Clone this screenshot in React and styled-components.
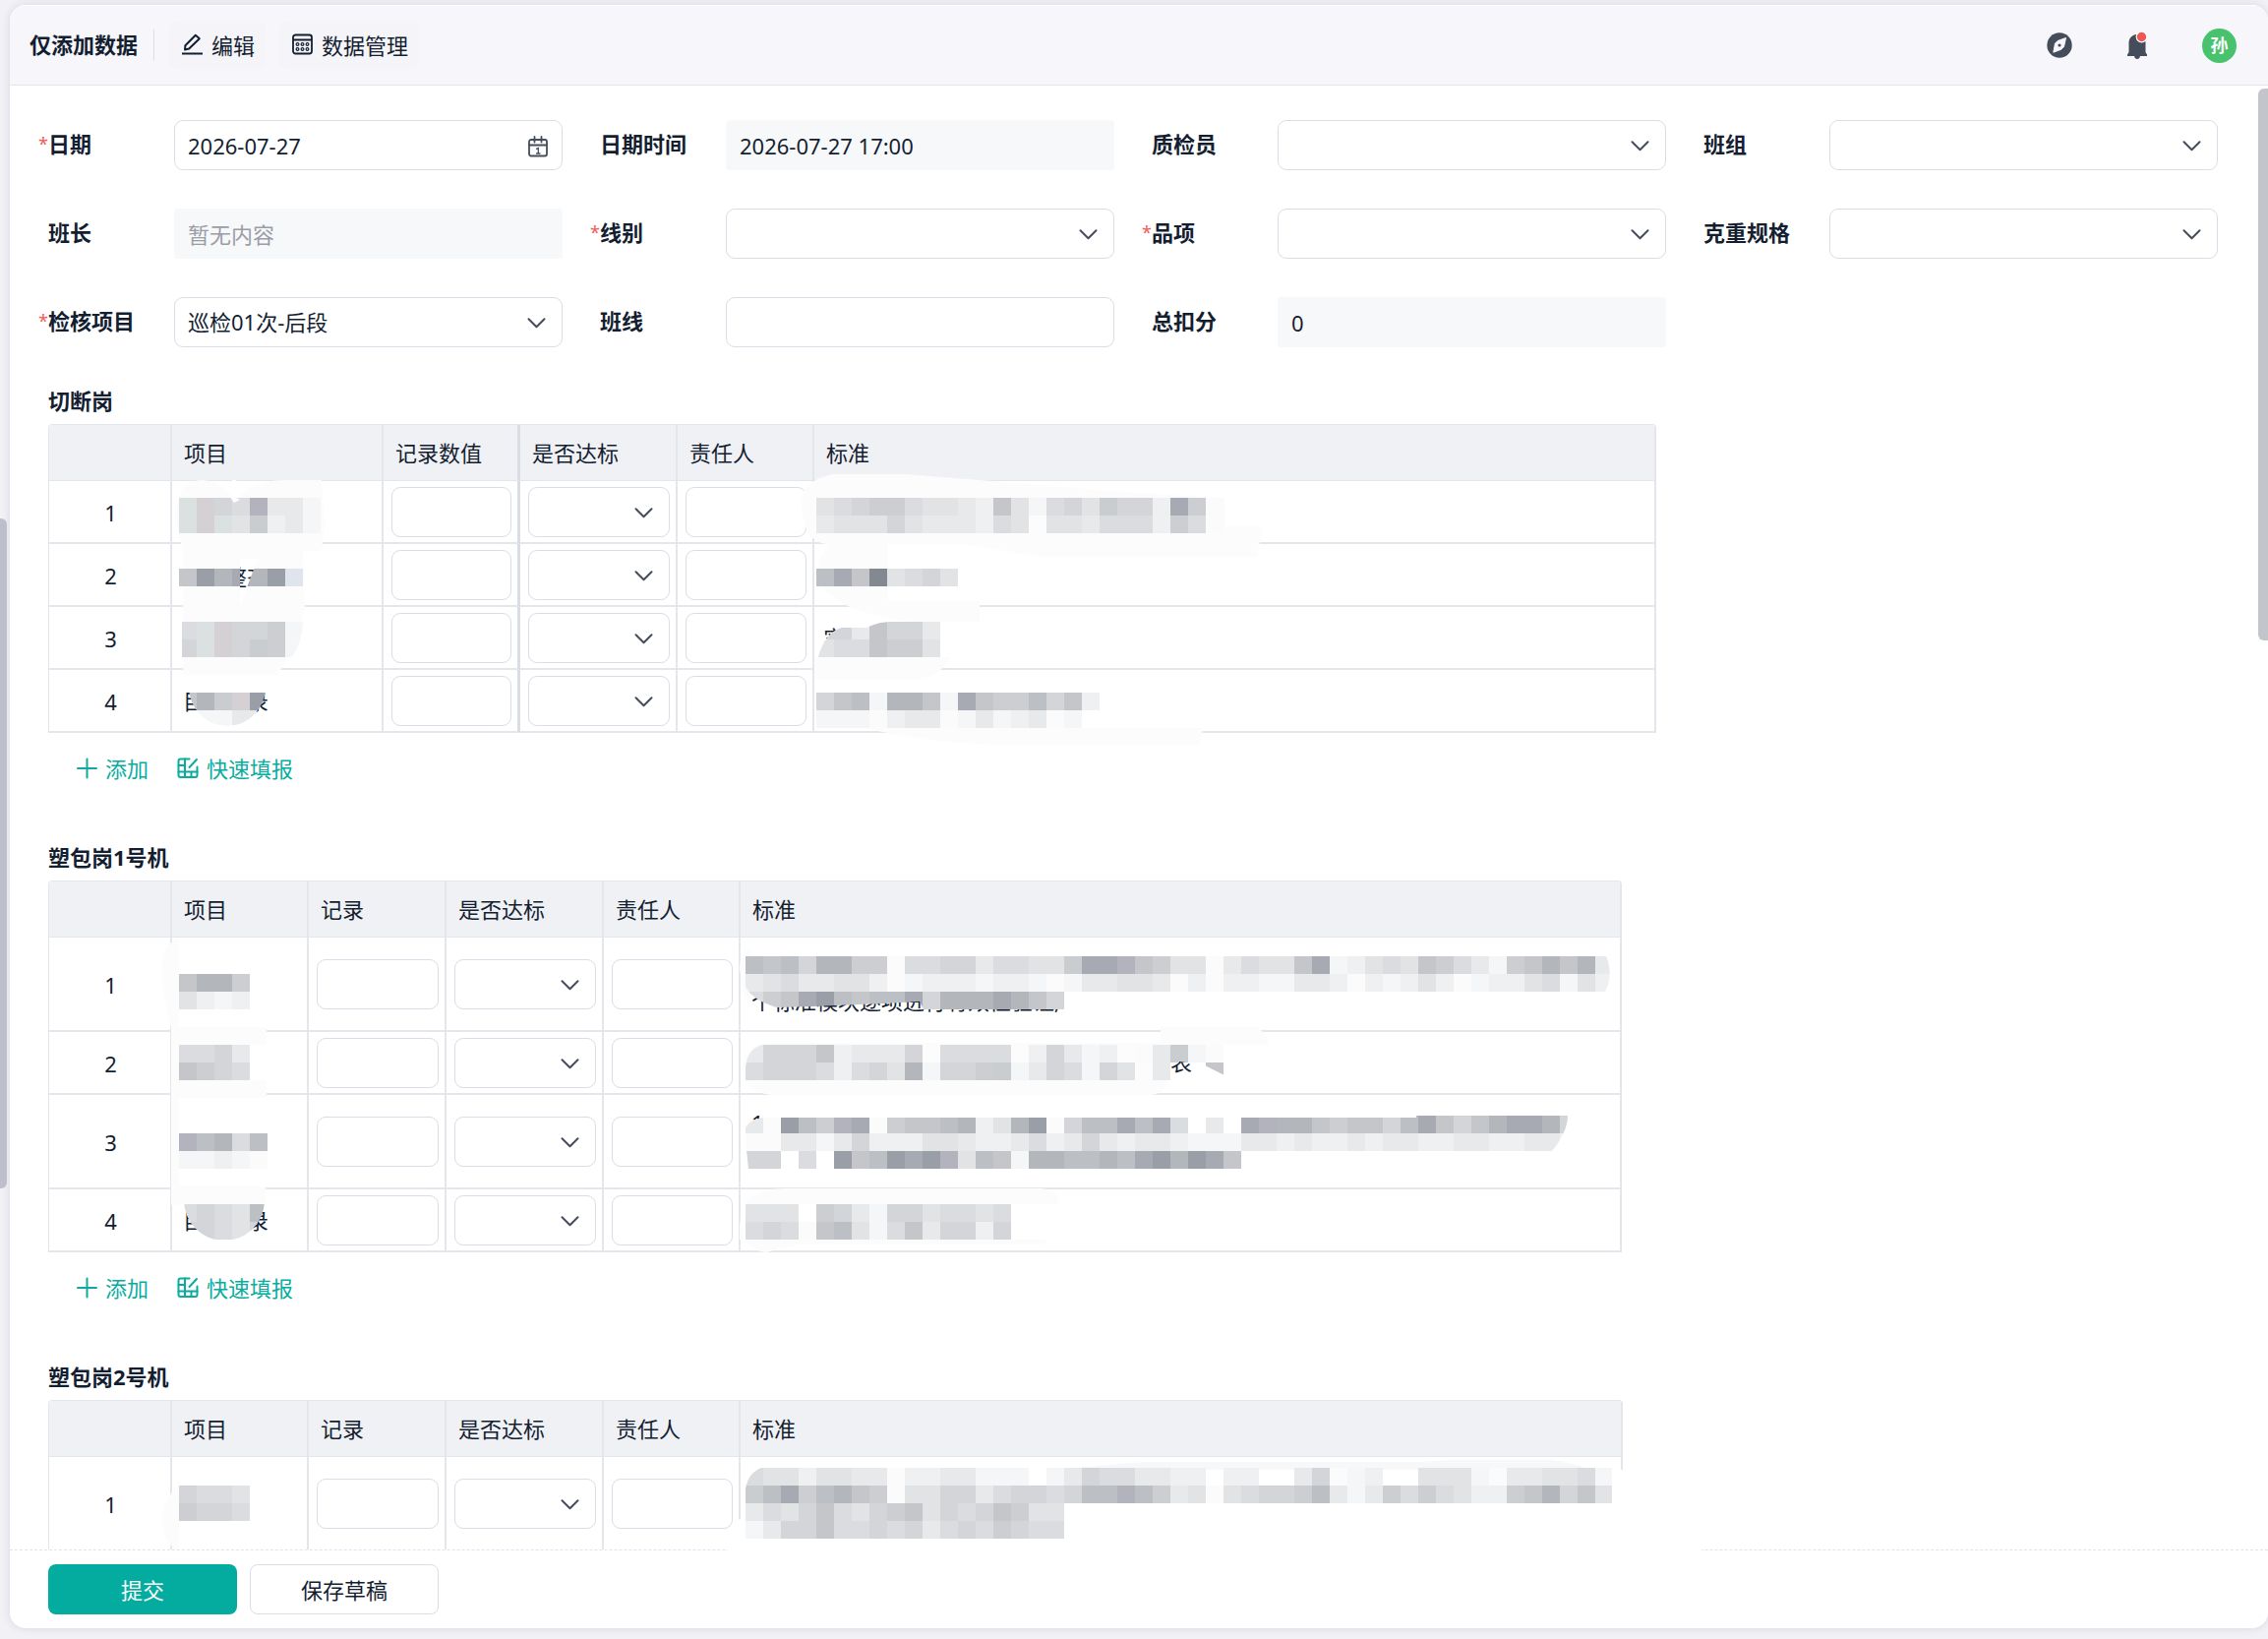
import React from 'react'
import styled, { createGlobalStyle } from 'styled-components'

const FIELDS = [
    { id: 'date', label: '日期', required: true, kind: 'date', value: '2026-07-27' },
    { id: 'datetime', label: '日期时间', kind: 'readonly', value: '2026-07-27 17:00' },
    { id: 'inspector', label: '质检员', kind: 'select' },
    { id: 'team', label: '班组', kind: 'select' },
    { id: 'leader', label: '班长', kind: 'readonly', placeholder: '暂无内容' },
    { id: 'line', label: '线别', required: true, kind: 'select' },
    { id: 'item', label: '品项', required: true, kind: 'select' },
    { id: 'weight', label: '克重规格', kind: 'select' },
    { id: 'check', label: '检核项目', required: true, kind: 'select', value: '巡检01次-后段' },
    { id: 'shift', label: '班线', kind: 'text' },
    { id: 'score', label: '总扣分', kind: 'readonly', value: '0' },
]

const SECTIONS = [
    {
        id: 'cut',
        title: '切断岗',
        widths: [125, 215, 139, 160, 139, 856],
        frozen: 2,
        columns: ['', '项目', '记录数值', '是否达标', '责任人', '标准'],
        rows: [64, 64, 64, 64],
        cover: CutCover,
        editable: true,
    },
    {
        id: 'pack1',
        title: '塑包岗1号机',
        widths: [125, 139, 140, 160, 139, 896],
        columns: ['', '项目', '记录', '是否达标', '责任人', '标准'],
        rows: [96, 64, 96, 64],
        cover: PackOneCover,
        editable: true,
    },
    {
        id: 'pack2',
        title: '塑包岗2号机',
        widths: [125, 139, 140, 160, 139, 897],
        columns: ['', '项目', '记录', '是否达标', '责任人', '标准'],
        rows: [96],
        cover: PackTwoCover,
    },
]

// shades of the masking blocks, light to dark, then the tinted ones
const SHADES = {
    a: '#fbfbfb', b: '#f5f6f7', c: '#eff0f1', d: '#e8e9eb', e: '#e2e3e5', f: '#dbdcdf',
    g: '#d4d5d9', h: '#cdced1', i: '#c4c6ca', j: '#bcbfc4', k: '#b3b6bb', l: '#a7aab2',
    m: '#999ea7', n: '#848891', p: '#d5d0d3', q: '#dbe1e1', r: '#b3b3be', s: '#c9cdd0',
    t: '#e0e4ec',
}
const CELL = 18

function Cells({ x, y, rows, clip }) {
    return (
        <g clipPath={clip ? `url(#${clip})` : undefined} shapeRendering="crispEdges">
            {rows.map((row, r) =>
                row.split('').map((shade, c) =>
                    SHADES[shade] ? (
                        <rect key={`${r}-${c}`} x={x + c * CELL} y={y + r * CELL} width={CELL} height={CELL} fill={SHADES[shade]} />
                    ) : null
                )
            )}
        </g>
    )
}

function CutCover() {
    return (
        <Cover aria-hidden="true">
            <defs>
                <clipPath id="cut-gap"><path d="M195 137 L213 137 L195 185 Z" /></clipPath>
                <clipPath id="cut-round"><ellipse cx="182" cy="267" rx="39" ry="40" /></clipPath>
                <clipPath id="cut-mid"><path d="M136 201 H259 Q258 222 248 237 H136 Z" /></clipPath>
                <clipPath id="cut-slope"><path d="M783 237 Q790 212 807 207 H832 Q844 201 856 201 H910 V237 Z" /></clipPath>
            </defs>
            <g fill="#fcfcfc">
                <path d="M129 99 Q129 57 157 57 Q180 59 189 79 Q206 57 241 57 H278 L281 99 L278 129 H137 Z" />
                <path d="M137 129 H259 L261 187 Q251 229 233 255 H137 Z" />
                <path d="M765 79 Q767 119 791 122 H931 L1011 135 H1229 L1235 104 H1196 V75 L1121 71 L871 51 H797 Q765 59 765 79 Z" />
                <path d="M783 147 Q790 114 815 113 L854 117 V180 H947 V201 H880 Q783 190 783 147 Z" />
                <path d="M779 237 H918 Q905 259 880 259 H779 Z" />
                <path d="M781 291 Q790 310 807 309 H1174 L1171 326 H971 Q891 324 831 309 Z" />
            </g>
            <Cells x={133} y={75} rows={['qpgfrddb', 'qpqescdb']} />
            <path d="M187 57 H191 V75 L195 77 L189 80 L186 76 Z" fill="#fff" />
            <Cells x={133} y={147} rows={['imklkmt']} />
            <path d="M195 137 L213 137 L195 185 Z" fill="#fff" />
            <g clipPath="url(#cut-gap)">
                <CoverText x="180" y="164">整齐</CoverText>
            </g>
            <Cells x={133} y={201} rows={['fqpgghb', 'gqpgshb']} clip="cut-mid" />
            <CoverText x="137" y="290">目</CoverText>
            <CoverText x="202" y="290">录</CoverText>
            <Cells x={133} y={273} rows={['ikspm', 'bbbdd']} clip="cut-round" />

            <Cells x={781} y={75} rows={['efghhfeedciebfgesggclha', 'deeegedddcfe.eedfffchfa']} />
            <Cells x={781} y={147} rows={['jlinefge']} />
            <CoverText x="788" y="226">实</CoverText>
            <path d="M783 237 Q790 212 807 207 H832 V237 Z" fill="#e8e9eb" />
            <Cells x={781} y={201} rows={['ggdiggd', 'effihhe']} clip="cut-slope" />
            <Cells x={781} y={273} rows={['gijbkkiblihhjgic', 'bbbacddabdbcdab']} />
        </Cover>
    )
}

function PackOneCover() {
    return (
        <Cover aria-hidden="true">
            <defs>
                <clipPath id="p1-round"><ellipse cx="179" cy="325" rx="41" ry="41" /></clipPath>
                <clipPath id="p1-first">
                    <path d="M706 77 H1584 Q1592 95 1583 113 H1033 V131 H890 L886 123 Q811 127 741 129 Q713 121 708 105 Z" />
                </clipPath>
                <clipPath id="p1-second">
                    <path d="M727 167 H1196 V198 L1176 188 L1150 184 V203 H709 V190 Q711 170 727 167 Z" />
                </clipPath>
                <clipPath id="p1-third">
                    <path d="M712 293 L708 255 Q711 241 731 241 H1391 V239 H1545 Q1545 255 1529 275 H1213 V293 Z" />
                </clipPath>
            </defs>
            <g fill="#fcfcfc">
                <path d="M133 58 Q115 66 116 90 Q117 120 125 150 V330 H133 Z" />
                <path d="M125 149 H222 V167 H125 Z M125 203 H222 V221 H125 Z M125 311 H221 V329 H125 Z" />
                <path d="M703 90 Q703 70 715 70 V120 H708 Z" />
                <path d="M735 165 H1140 V190 Q1140 218 1120 218 H735 Q706 214 706 190 Q708 166 735 165 Z" />
                <path d="M1131 149 H1230 Q1241 160 1241 167 H1131 Z" />
                <path d="M709 329 Q720 313 750 313 H1010 Q1028 315 1028 329 Z" />
                <path d="M703 340 Q704 376 730 378 L760 370 H1010 L1018 365 H703 Z" />
            </g>
            <Cells x={133} y={95} rows={['ikkh', 'ecbc']} />
            <Cells x={133} y={167} rows={['ffgd', 'ihgf']} />
            <Cells x={133} y={257} rows={['rjkfj', 'bbcba']} />
            <CoverText x="137" y="354">目</CoverText>
            <CoverText x="202" y="354">录</CoverText>
            <Cells x={133} y={329} rows={['fgfej', 'ggfeg']} clip="p1-round" />

            <CoverText x="715" y="131">个标准模块逐项进行有效性验证;</CoverText>
            <Cells
                x={709}
                y={77}
                rows={[
                    'jijgkkhhaffggdffeesllriheeadfeeilbcefeihfdbhikikd',
                    'defddeecabcccbccbabddeedacaccbbddcacbcecabccefbec',
                    'fhilmjijjlgkkklkig',
                ]}
                clip="p1-first"
            />
            <CoverText x="1141" y="193">表</CoverText>
            <path d="M1139 198 L1160 196 L1185 204 H1139 Z" fill="#fff" />
            <Cells x={709} y={167} rows={['dgggicdddg.ffff.cgdbc.adsba', 'fgggfcfgekbgghsbdgfbge.d..i']} clip="p1-second" />
            <CoverText x="715" y="255">1</CoverText>
            <Cells
                x={709}
                y={239}
                rows={[
                    'damjhrlahiijkcekmagjjljlf.d.lrkkihiigjligikllkg',
                    'aaddbdgccceedccdfcdgdcddcbbbddcdccdcddccddccddc',
                    'gg.f.mijmlmrejibkkjjkjlmkmli',
                ]}
                clip="p1-third"
            />
            <Cells x={709} y={329} rows={['eee.hgdbggeffef', 'fgfaijebfidggcg']} />
        </Cover>
    )
}

function PackTwoCover() {
    return (
        <Cover aria-hidden="true">
            <defs>
                <clipPath id="p2-round">
                    <path d="M725 69 H1590 V105 H1034 V141 H709 V90 Q712 74 725 69 Z" />
                </clipPath>
            </defs>
            <path d="M133 86 Q117 100 116 125 Q118 145 133 155 Z" fill="#fcfcfc" />
            <path d="M706 120 Q703 66 733 65 L745 70 H1030 L1110 63 H1530 L1560 69 L1605 71 V153 H691 Q691 125 706 120 Z" fill="#fff" />
            <path d="M1045 69 L1110 63 H1400 L1420 61 H1530 Q1560 66 1566 71 H1045 Z" fill="#f7f8fa" />
            <Cells x={133} y={87} rows={['gffe', 'hggf']} />
            <Cells
                x={709}
                y={69}
                rows={[
                    'feeceeddaccddbbb.bdgffddcc.cc..dgabc..eeebaddeefb',
                    'sjlhjkihaeeggdfggfgjjrjhdeaefgghjdbdhfhfecchikgie',
                    'dfegifeghiegfgihee',
                    'bdggiffgfgdfgfhgff',
                ]}
                clip="p2-round"
            />
        </Cover>
    )
}

const EditIcon = () => (
    <svg width="21" height="22" viewBox="0 0 21 22" fill="none" stroke="currentColor" strokeWidth="2" strokeLinejoin="round">
        <path d="M3 16.500 L3.400 12.300 L13.800 1.800 L17.800 5.200 L7.200 15.500 Z" />
        <path d="M0 20.500 H21" />
    </svg>
)

const GridIcon = () => (
    <svg width="21" height="22" viewBox="0 0 21 22" fill="none" stroke="currentColor" strokeWidth="1.800">
        <rect x="1" y="1.500" width="19" height="19" rx="2.500" />
        <path d="M1 6.500 H20" />
        <g strokeWidth="1.200">
            <circle cx="5.500" cy="11" r="1.400" /><circle cx="10.500" cy="11" r="1.400" /><circle cx="15.500" cy="11" r="1.400" />
            <circle cx="5.500" cy="16" r="1.400" /><circle cx="10.500" cy="16" r="1.400" /><circle cx="15.500" cy="16" r="1.400" />
        </g>
    </svg>
)

const CompassIcon = () => (
    <svg width="26" height="26" viewBox="0 0 26 26">
        <circle cx="13" cy="13" r="12.700" fill="#454d5b" />
        <path d="M19.500 5.500 L17.500 14.500 L14.800 17.200 L6.800 20.200 L8.500 11.200 L11 8.600 Z" fill="#f7f6fb" stroke="#f7f6fb" strokeLinejoin="round" />
        <circle cx="13" cy="13" r="1.600" fill="#454d5b" />
    </svg>
)

const BellIcon = () => (
    <svg width="22" height="30" viewBox="0 0 22 30">
        <path d="M10.500 4 C5 4.500 2.500 8.500 2.500 13 V22 L1 24.500 V26 H8 Q8.500 29 11 29 Q13.500 29 14 26 H21 V24.500 L19.500 22 V12 C19.500 8 16 4 10.500 4 Z" fill="#454d5b" />
        <circle cx="15.500" cy="6.500" r="5.300" fill="#f25654" stroke="#fff" strokeWidth="1.200" />
    </svg>
)

const CalendarIcon = () => (
    <svg width="20" height="22" viewBox="0 0 20 22" fill="none" stroke="#454d5b" strokeWidth="1.800" strokeLinecap="round">
        <rect x="1" y="4" width="18" height="16.500" rx="2" />
        <path d="M1 9.500 H19 M6.500 1 V6.500 M13.500 1 V6.500" />
        <path d="M8.500 13.300 L10.300 12.500 V18 M8.500 18 H12" strokeWidth="1.300" />
    </svg>
)

const PlusIcon = () => (
    <svg width="21" height="22" viewBox="0 0 21 22" fill="none" stroke="currentColor" strokeWidth="2" strokeLinecap="round">
        <path d="M1 11 H20 M10.500 1.500 V20.500" />
    </svg>
)

const FillIcon = () => (
    <svg width="22" height="22" viewBox="0 0 22 22" fill="none" stroke="currentColor" strokeWidth="2" strokeLinecap="round" strokeLinejoin="round">
        <path d="M12.500 1.500 H3.500 Q1.500 1.500 1.500 3.500 V18 Q1.500 20 3.500 20 H18.500 Q20.500 20 20.500 18 V9.500" />
        <path d="M1.500 8 H8 M1.500 14.500 H20.500 M8 1.500 V20 M14.500 14.500 V20" />
        <path d="M20 2 L12.500 10" />
    </svg>
)

const ChevronIcon = () => (
    <svg width="19" height="11" viewBox="0 0 19 11" fill="none" stroke="#454d5b" strokeWidth="2" strokeLinecap="round" strokeLinejoin="round">
        <path d="M1.500 1.200 L9.500 9.300 L17.500 1.200" />
    </svg>
)

function Dropdown({ id, label, value = '' }) {
    return (
        <Control>
            <SelectBox id={id} aria-label={label} defaultValue={value}>
                <option value={value}>{value}</option>
            </SelectBox>
            <Suffix $right={17}><ChevronIcon/></Suffix>
        </Control>
    )
}

function Field({ field }) {
    return (
        <FieldRow>
            <Label htmlFor={field.id}>
                {field.required && <Star>*</Star>}
                {field.label}
            </Label>
            {field.kind === 'select' ? (
                <Dropdown id={field.id} value={field.value} />
            ) : (
                <Control>
                    <TextBox
                        id={field.id}
                        defaultValue={field.value}
                        placeholder={field.placeholder}
                        readOnly={field.kind === 'readonly'}
                        $muted={field.kind === 'readonly'}
                    />
                    {field.kind === 'date' && <Suffix $right={15}><CalendarIcon/></Suffix>}
                </Control>
            )}
        </FieldRow>
    )
}

function SubForm({ section }) {
    const CoverLayer = section.cover
    return (
        <Section>
            <SectionTitle>{section.title}</SectionTitle>
            <TableWrap>
                <Table>
                    <colgroup>
                        {section.widths.map((width, key) => (
                            <Col key={key} $width={width} />
                        ))}
                    </colgroup>
                    <thead>
                        <tr>
                            {section.columns.map((name, key) => (
                                <HeadCell key={key} $frozen={key === section.frozen}>{name}</HeadCell>
                            ))}
                        </tr>
                    </thead>
                    <tbody>
                        {section.rows.map((height, key) => (
                            <Row key={key} $height={height}>
                                <NumberCell>{key + 1}</NumberCell>
                                <Cell/>
                                <Cell $frozen={section.frozen === 2}><TextBox aria-label={section.columns[2]} /></Cell>
                                <Cell><Dropdown label={section.columns[3]} /></Cell>
                                <Cell><TextBox aria-label={section.columns[4]} /></Cell>
                                <Cell/>
                            </Row>
                        ))}
                    </tbody>
                </Table>
                <CoverLayer/>
            </TableWrap>
            {section.editable && (
                <Actions>
                    <LinkButton type="button"><PlusIcon/>添加</LinkButton>
                    <LinkButton type="button"><FillIcon/>快速填报</LinkButton>
                </Actions>
            )}
        </Section>
    )
}

function App() {
    return (
        <Shell>
            <GlobalStyle/>
            <OuterThumb/>
            <Card>
                <Header>
                    <Title>仅添加数据</Title>
                    <Divider/>
                    <ToolButtons>
                        <ToolButton type="button"><EditIcon/>编辑</ToolButton>
                        <ToolButton type="button"><GridIcon/>数据管理</ToolButton>
                    </ToolButtons>
                    <UserArea>
                        <IconButton type="button" aria-label="导航"><CompassIcon/></IconButton>
                        <IconButton type="button" aria-label="通知"><BellIcon/></IconButton>
                        <Avatar>孙</Avatar>
                    </UserArea>
                </Header>
                <Body>
                    <FormGrid>
                        {FIELDS.map((field) => (
                            <Field key={field.id} field={field} />
                        ))}
                    </FormGrid>
                    {SECTIONS.map((section) => (
                        <SubForm key={section.id} section={section} />
                    ))}
                    <InnerThumb/>
                </Body>
                <Footer>
                    <Submit type="button">提交</Submit>
                    <Draft type="button">保存草稿</Draft>
                    <Smudge/>
                </Footer>
            </Card>
        </Shell>
    )
}

export default App

const GlobalStyle = createGlobalStyle`
    * {
        box-sizing: border-box;
    }
    body {
        margin: 0;
        overflow: hidden;
    }
    body, button, input, select {
        font-family: "Noto Sans", "Noto Sans CJK SC", sans-serif;
        font-size: 22px;
        color: #141e31;
    }
    svg {
        display: block;
        flex: none;
    }
`

const Shell = styled.div`
    position: relative;
    display: flex;
    height: 100vh;
    padding: 5px 0 11px 10px;
    background: #f2f1f6;
`

const OuterThumb = styled.div`
    position: absolute;
    left: 0;
    top: 527px;
    width: 7px;
    height: 681px;
    border-radius: 0 6px 6px 0;
    background: #bdc0cb;
`

const Card = styled.main`
    flex: 1;
    min-width: 0;
    display: flex;
    flex-direction: column;
    border-radius: 16px;
    overflow: hidden;
    background: #fff;
    box-shadow: 0 0 10px rgba(40, 40, 70, 0.12);
`

const Header = styled.header`
    flex: none;
    display: flex;
    align-items: center;
    height: 82px;
    padding: 0 32px 0 20px;
    border-top: 1px solid #fff;
    border-bottom: 1px solid #e4e5ec;
    background: #f7f6fb;
`

const Title = styled.h1`
    margin: 0;
    padding-bottom: 2px;
    font-size: 22px;
    font-weight: 700;
    line-height: 30px;
`

const Divider = styled.div`
    width: 1px;
    height: 32px;
    margin: 0 15px 0 16px;
    background: #dcdee5;
`

const ToolButtons = styled.div`
    display: flex;
    gap: 14px;
`

const ToolButton = styled.button`
    display: flex;
    align-items: center;
    gap: 9px;
    height: 50px;
    padding: 0 11px 2px 13px;
    border: 0;
    border-radius: 9px;
    background: #f5f5f9;
    cursor: pointer;
`

const UserArea = styled.div`
    display: flex;
    align-items: center;
    gap: 55px;
    margin-left: auto;
`

const IconButton = styled.button`
    padding: 0;
    border: 0;
    background: none;
    cursor: pointer;
`

const Avatar = styled.div`
    width: 35px;
    height: 35px;
    border-radius: 50%;
    background: #48c26d;
    color: #fff;
    font-size: 18px;
    font-weight: 700;
    line-height: 35px;
    text-align: center;
`

const Body = styled.div`
    position: relative;
    flex: 1;
    min-height: 0;
    padding: 35px 51px 0 39px;
    overflow: hidden;
`

const FormGrid = styled.div`
    display: grid;
    grid-template-columns: repeat(4, 1fr);
    gap: 39px 38px;
`

const FieldRow = styled.div`
    display: grid;
    grid-template-columns: 128px 1fr;
    align-items: center;
`

const Label = styled.label`
    position: relative;
    padding-bottom: 4px;
    font-weight: 700;
    line-height: 30px;
`

// hangs in the margin to the left of the label
const Star = styled.span`
    position: absolute;
    right: 100%;
    top: 0;
    color: #f15b57;
    font-size: 18px;
    font-weight: 400;
`

const Control = styled.div`
    position: relative;
    min-width: 0;
`

const TextBox = styled.input`
    display: block;
    width: 100%;
    height: 51px;
    padding: 0 13px;
    border: 1px solid ${(props) => (props.$muted ? '#f7f8fa' : '#dadde5')};
    border-radius: ${(props) => (props.$muted ? '3px' : '9px')};
    background: ${(props) => (props.$muted ? '#f7f8fa' : '#fff')};
    outline: none;
    &::placeholder{
        color: #9a9da5;
        opacity: 1;
    }
`

const SelectBox = styled.select`
    display: block;
    width: 100%;
    height: 51px;
    padding: 0 48px 1px 13px;
    border: 1px solid #dadde5;
    border-radius: 9px;
    background: #fff;
    appearance: none;
    outline: none;
`

const Suffix = styled.span`
    position: absolute;
    top: 0;
    bottom: 0;
    right: ${(props) => props.$right}px;
    display: flex;
    align-items: center;
    padding-top: 2px;
    pointer-events: none;
`

const Section = styled.section`
    margin-top: 39px;
    & + & {
        margin-top: 50px;
    }
`

const SectionTitle = styled.h2`
    margin: 0 0 9px;
    font-size: 22px;
    font-weight: 700;
    line-height: 30px;
`

const TableWrap = styled.div`
    position: relative;
    width: max-content;
`

const Table = styled.table`
    width: 1px;
    table-layout: fixed;
    border-collapse: separate;
    border-spacing: 0;
    border: 1px solid #e5e6ec;
    border-width: 1px 0 0 1px;
    border-radius: 4px 4px 0 0;
    overflow: hidden;
`

const Col = styled.col`
    width: ${(props) => props.$width}px;
`

const HeadCell = styled.th`
    height: 57px;
    padding: 0 12px;
    border-right: ${(props) => (props.$frozen ? '3px solid #d9dee5' : '2px solid #e5e6ec')};
    border-bottom: 1px solid #e5e6ec;
    background: #f0f1f5;
    font-weight: 400;
    line-height: 30px;
    text-align: left;
    white-space: nowrap;
`

const Row = styled.tr`
    height: ${(props) => props.$height}px;
`

const Cell = styled.td`
    padding: 0 6px 0 8px;
    border-right: ${(props) => (props.$frozen ? '3px solid #d9dee5' : '2px solid #e5e6ec')};
    border-bottom: 2px solid #e5e6ec;
`

const NumberCell = styled(Cell)`
    padding: 1px 0 0 2px;
    text-align: center;
`

const Cover = styled.svg`
    position: absolute;
    left: 0;
    top: 0;
    width: 100%;
    height: 100%;
    overflow: visible;
    pointer-events: none;
`

const CoverText = styled.text`
    fill: #141e31;
    font-size: 22px;
`

const Actions = styled.div`
    display: flex;
    align-items: center;
    gap: 29px;
    height: 50px;
    margin-top: 11px;
    padding-left: 29px;
`

const LinkButton = styled.button`
    display: flex;
    align-items: center;
    gap: 8px;
    padding: 0;
    border: 0;
    background: none;
    color: #0aaca0;
    line-height: 30px;
    cursor: pointer;
`

const InnerThumb = styled.div`
    position: absolute;
    right: 0;
    top: 3px;
    width: 10px;
    height: 561px;
    border-radius: 6px 0 0 6px;
    background: #c2c5ca;
`

const Footer = styled.footer`
    position: relative;
    flex: none;
    display: flex;
    gap: 13px;
    padding: 14px 39px;
    border-top: 1px dashed #e3e4ea;
`

const FooterButton = styled.button`
    width: 192px;
    height: 51px;
    padding: 0 0 2px;
    border-radius: 8px;
    cursor: pointer;
`

const Submit = styled(FooterButton)`
    border: 0;
    background: #04aca0;
    color: #fff;
`

const Draft = styled(FooterButton)`
    border: 1px solid #dadde5;
    background: #fff;
`

const Smudge = styled.div`
    position: absolute;
    left: 730px;
    top: -1px;
    width: 990px;
    height: 6px;
    background: #fff;
`
